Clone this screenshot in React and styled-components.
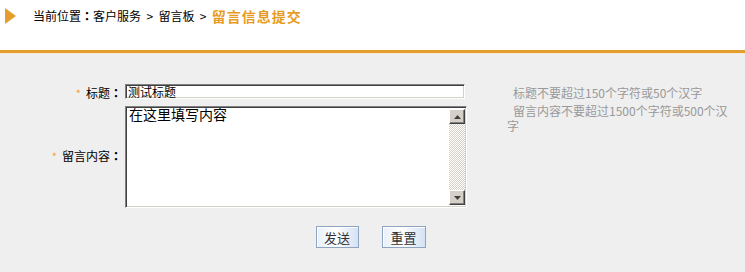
import React from "react";
import styled, { createGlobalStyle } from "styled-components";

const Global = createGlobalStyle`
  html, body { margin: 0; padding: 0; background: #efefef; }
  body { font-family: "Noto Sans CJK SC", "Noto Sans", sans-serif; font-size: 12px; color: #000; }
`;

const Page = styled.div`
  width: 745px;
  min-height: 272px;
  background: #efefef;
`;

const Header = styled.div`
  height: 50px;
  background: #fff;
  border-bottom: 3px solid #e39e2d;
  box-shadow: 0 1px 0 #f6ead6;
  margin-bottom: 1px;
`;

const Crumbs = styled.div`
  height: 31px;
  display: flex;
  align-items: center;
  padding-left: 5px;
  gap: 17px;
  font-size: 12px;
  line-height: 1;
`;

const Arrow = styled.span`
  width: 0;
  height: 0;
  border-top: 8px solid transparent;
  border-bottom: 8px solid transparent;
  border-left: 11px solid #e39e2d;
`;

const Path = styled.div`
  display: flex;
  align-items: center;
  white-space: pre;
`;

const Colon = styled.span`
  font-family: "Noto Sans CJK TC", "Noto Sans CJK SC", sans-serif;
  font-weight: bold;
`;

const Current = styled.span`
  color: #e69c24;
  font-weight: bold;
  font-size: 14px;
  letter-spacing: 1px;
`;

const Form = styled.div`
  display: grid;
  grid-template-columns: 125px 342px 1fr;
  row-gap: 5px;
  padding-top: 30px;
`;

const Label = styled.div`
  align-self: center;
  text-align: right;
  padding-right: 3px;
  white-space: nowrap;
  margin-top: ${(p) => (p.$lift ? "-3px" : "0")};
`;

const Star = styled.span`
  color: #f0a030;
  margin-right: 5px;
  font-size: 11px;
`;

const Hint = styled.div`
  align-self: ${(p) => (p.$top ? "start" : "center")};
  margin-top: ${(p) => (p.$top ? "-3px" : "0")};
  margin-left: 40px;
  width: 224px;
  color: #999;
  font-size: 12px;
  line-height: 15px;
  text-indent: 6px;
`;

const insetBorder = `
  box-sizing: border-box;
  border: 1px solid;
  border-color: #808080 #ffffff #ffffff #808080;
  box-shadow: inset 1px 1px 0 #404040, inset -1px -1px 0 #d4d0c8;
  background: #fff;
`;

const TextInput = styled.input`
  ${insetBorder}
  width: 340px;
  height: 15px;
  padding: 0 2px;
  font-family: inherit;
  font-size: 12px;
  line-height: 12px;
  color: #000;
  outline: none;
`;

const AreaBox = styled.div`
  ${insetBorder}
  height: 102px;
  display: flex;
  padding: 0 1px 0 2px;
`;

const Area = styled.textarea`
  flex: 1;
  border: none;
  outline: none;
  resize: none;
  overflow: hidden;
  padding: 0 1px;
  margin: 1px 0 2px;
  font-family: "Noto Sans CJK SC", sans-serif;
  font-size: 14px;
  line-height: 13px;
  color: #000;
  background: #fff;
`;

const Scroll = styled.div`
  width: 16px;
  margin: 2px 0;
  display: flex;
  flex-direction: column;
  background: repeating-conic-gradient(#d4d0c8 0 25%, #ffffff 0 50%) 0 0 / 2px 2px;
`;

const ScrollBtn = styled.div`
  box-sizing: border-box;
  width: 16px;
  height: 15px;
  background: #d4d0c8;
  border: 1px solid;
  border-color: #ffffff #404040 #404040 #ffffff;
  box-shadow: inset -1px -1px 0 #808080;
  display: flex;
  align-items: center;
  justify-content: center;
`;

const Track = styled.div`
  flex: 1;
`;

const Buttons = styled.div`
  display: flex;
  justify-content: center;
  gap: 23px;
  padding-top: 18px;
  padding-right: 4px;
`;

const Button = styled.button`
  box-sizing: border-box;
  width: ${(p) => p.$w}px;
  height: 22px;
  padding: 0;
  border: 1px solid #8ea4c0;
  box-shadow: inset 1px 1px 0 #ffffff;
  background: linear-gradient(to right, #e8f0fb, #ffffff 45%, #d4e2f4);
  font-family: "Noto Sans CJK SC", sans-serif;
  font-size: 13px;
  color: #333;
  cursor: pointer;
`;

const Tri = ({ down }) => (
  <svg width="7" height="4" viewBox="0 0 7 4">
    <polygon points={down ? "0,0 7,0 3.5,4" : "0,4 7,4 3.5,0"} fill="#404040" />
  </svg>
);

export default function App() {
  return (
    <Page>
      <Global />
      <Header>
        <Crumbs>
          <Arrow />
          <Path>
            当前位置<Colon>：</Colon>客户服务  &gt;  留言板  &gt;  <Current>留言信息提交</Current>
          </Path>
        </Crumbs>
      </Header>
      <Form>
        <Label>
          <Star>*</Star>标题<Colon>：</Colon>
        </Label>
        <TextInput defaultValue="测试标题" />
        <Hint>标题不要超过150个字符或50个汉字</Hint>

        <Label $lift>
          <Star>*</Star>留言内容<Colon>：</Colon>
        </Label>
        <AreaBox>
          <Area defaultValue="在这里填写内容" />
          <Scroll>
            <ScrollBtn>
              <Tri />
            </ScrollBtn>
            <Track />
            <ScrollBtn>
              <Tri down />
            </ScrollBtn>
          </Scroll>
        </AreaBox>
        <Hint $top>留言内容不要超过1500个字符或500个汉字</Hint>
      </Form>
      <Buttons>
        <Button $w={43}>发送</Button>
        <Button $w={44}>重置</Button>
      </Buttons>
    </Page>
  );
}
